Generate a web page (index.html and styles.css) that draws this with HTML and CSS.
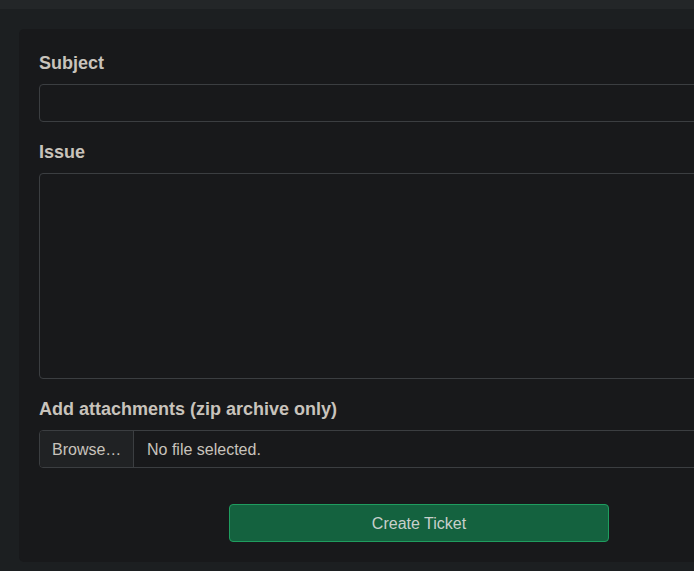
FILE: index.html
```html
<!DOCTYPE html>
<html>
<head>
<meta charset="utf-8">
<link rel="stylesheet" href="styles.css">
</head>
<body>
<div class="topbar"></div>
<div class="page">
  <form class="card">
    <div class="group">
      <label class="label">Subject</label>
      <div class="input"></div>
    </div>
    <div class="group">
      <label class="label">Issue</label>
      <div class="input textarea"></div>
    </div>
    <div class="group">
      <label class="label">Add attachments (zip archive only)</label>
      <div class="input file">
        <span class="browse">Browse…</span>
        <span class="filename">No file selected.</span>
      </div>
    </div>
    <div class="actions">
      <button type="button" class="submit">Create Ticket</button>
    </div>
  </form>
</div>
</body>
</html>
```
FILE: styles.css
```css
html, body {
  margin: 0;
  padding: 0;
  width: 694px;
  height: 571px;
  overflow: hidden;
  background: #1c1f21;
  font-family: "Liberation Sans", Arial, sans-serif;
  color: #c8c3bc;
}
.topbar {
  height: 9px;
  background: #232628;
}
.page {
  padding: 20px 0 0 19px;
  overflow: hidden;
}
.card {
  width: 760px;
  padding: 20px;
  background: #18191b;
  border-radius: 5px 0 0 5px;
  display: flex;
  flex-direction: column;
}
.group {
  display: flex;
  flex-direction: column;
  margin-bottom: 16px;
}
.label {
  font-size: 18px;
  font-weight: bold;
  line-height: 27px;
  padding-top: 1px;
  height: 26px;
  margin-bottom: 8px;
  color: #c8c3bc;
}
.input {
  height: 36px;
  border: 1px solid #3b3e41;
  border-radius: 4px;
  background: #18191b;
}
.textarea {
  height: 204px;
}
.file {
  display: flex;
  align-items: stretch;
  overflow: hidden;
  font-size: 16px;
}
.browse {
  width: 81px;
  padding-left: 12px;
  padding-top: 2px;
  background: #202224;
  border-right: 1px solid #3b3e41;
  display: flex;
  align-items: center;
}
.filename {
  padding-left: 13px;
  padding-top: 2px;
  display: flex;
  align-items: center;
}
.actions {
  display: flex;
  justify-content: center;
  padding-top: 20px;
}
.submit {
  width: 380px;
  height: 38px;
  padding: 2px 0 0;
  background: #14623f;
  border: 1px solid #1f9d5f;
  border-radius: 4px;
  color: #c8d0cc;
  font-family: "Liberation Sans", Arial, sans-serif;
  font-size: 16px;
}
```
